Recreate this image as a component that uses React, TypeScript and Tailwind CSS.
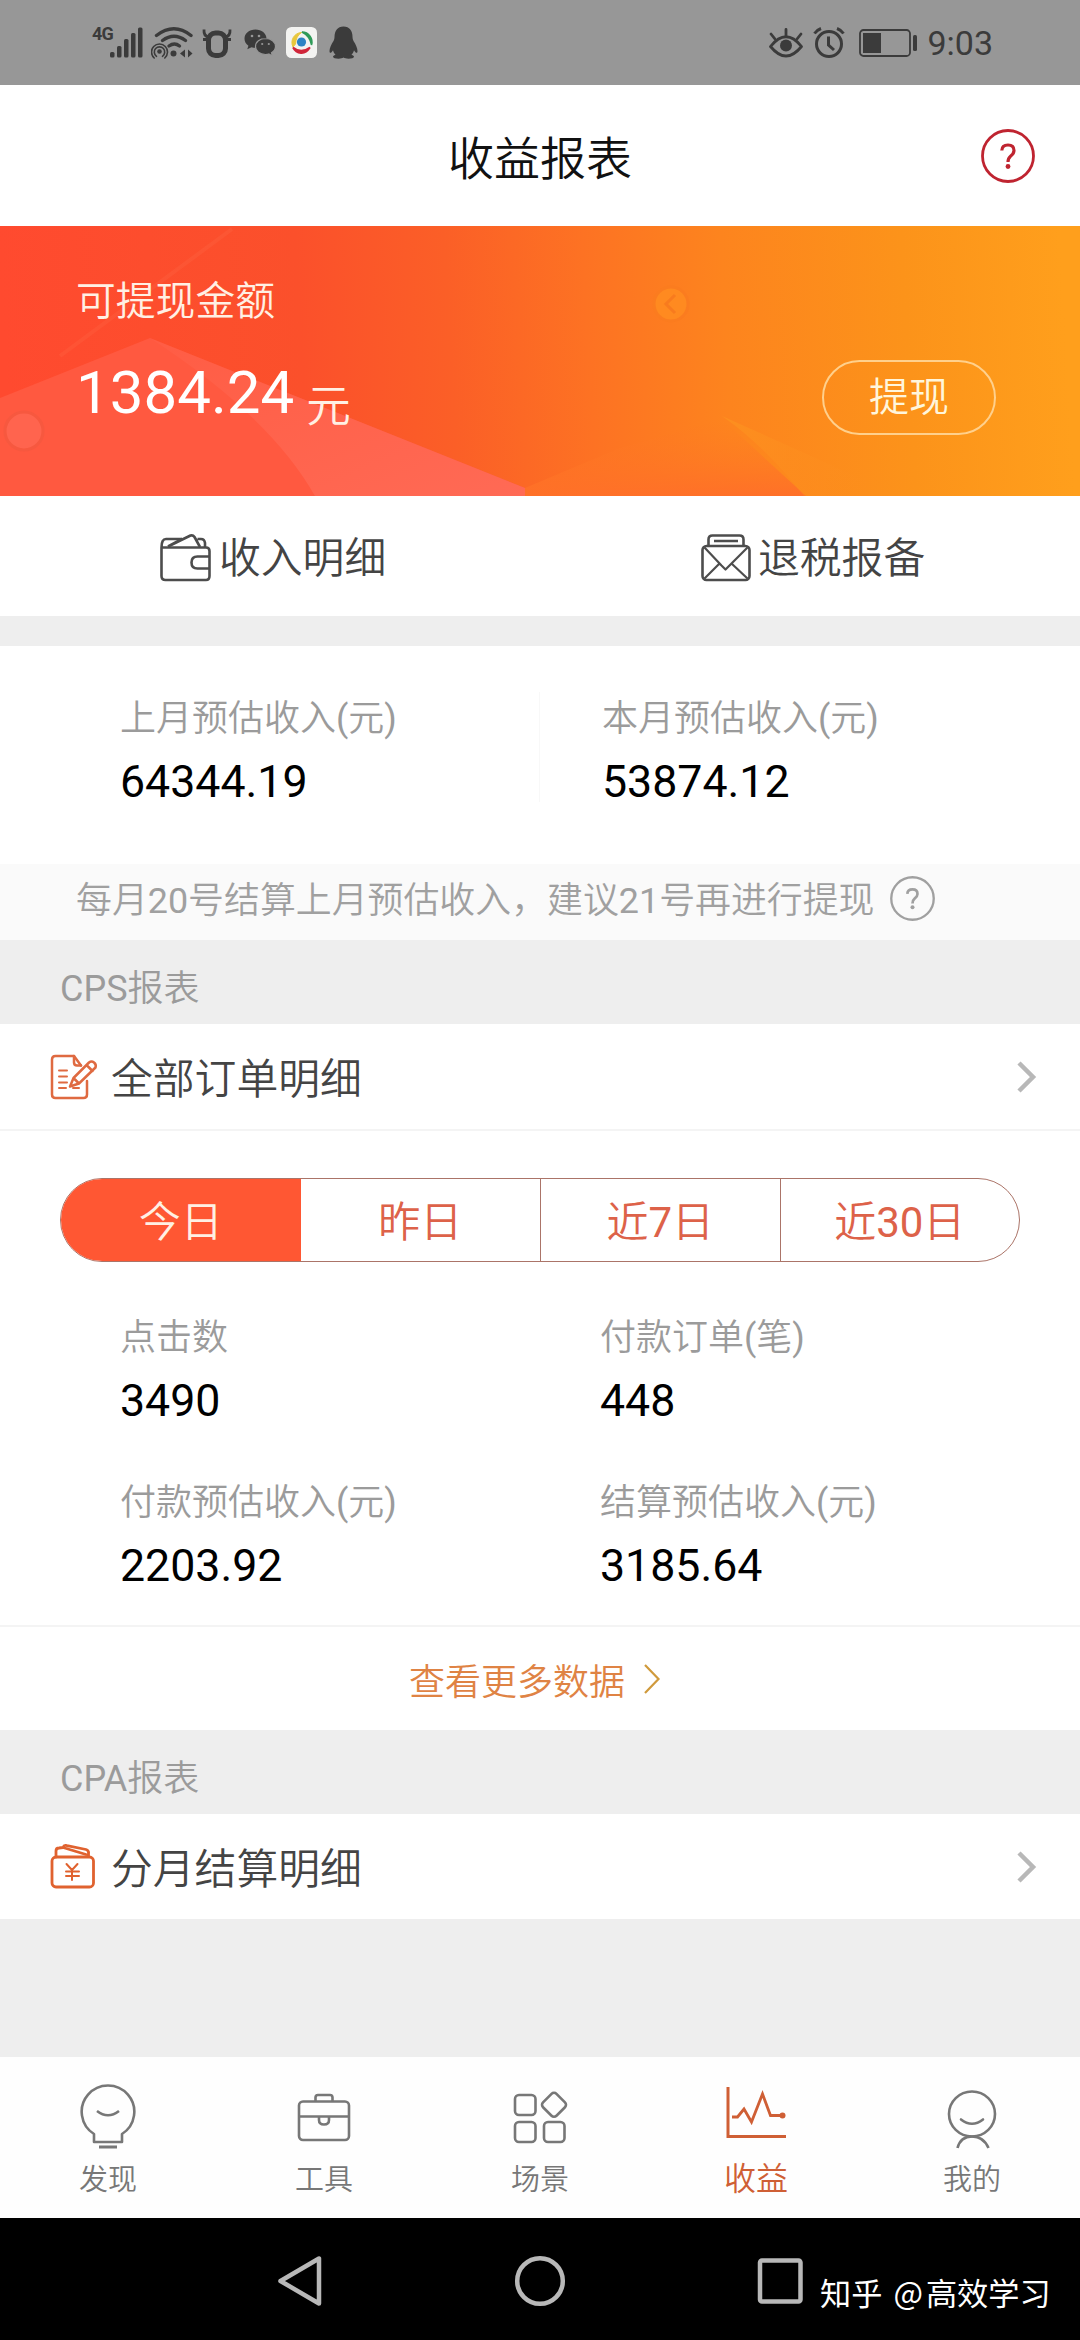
import React from "react";

type IconProps = { className?: string };

interface Stat {
  label: string;
  value: string;
}

const monthStats: Stat[] = [
  { label: "上月预估收入(元)", value: "64344.19" },
  { label: "本月预估收入(元)", value: "53874.12" },
];

const cpsStats: Stat[] = [
  { label: "点击数", value: "3490" },
  { label: "付款订单(笔)", value: "448" },
  { label: "付款预估收入(元)", value: "2203.92" },
  { label: "结算预估收入(元)", value: "3185.64" },
];

const ranges = ["今日", "昨日", "近7日", "近30日"];

/* ---------- status bar icons ---------- */

const SignalIcon = () => (
  <svg width="34" height="31" viewBox="0 0 34 31" fill="#3b3b3b">
    <rect x="0" y="25" width="4.5" height="5.5" rx="1.5" />
    <rect x="7" y="19" width="4.5" height="11.5" rx="1.5" />
    <rect x="14" y="12" width="4.5" height="18.5" rx="1.5" />
    <rect x="21" y="6" width="4.5" height="24.5" rx="1.5" />
    <rect x="28" y="0.5" width="4.5" height="30" rx="1.5" />
  </svg>
);

const WifiIcon = () => (
  <svg width="42" height="32" viewBox="0 0 42 32" fill="none" stroke="#3b3b3b" strokeLinecap="round">
    <path d="M5.5 8.5Q23 -5 40 8.5" strokeWidth="3.4" />
    <path d="M11.5 13.5Q23 5 34.5 13.5" strokeWidth="3.4" />
    <path d="M18 19Q23.5 15 28.5 19" strokeWidth="3.4" />
    <circle cx="8.5" cy="24.5" r="2.3" fill="#3b3b3b" stroke="none" />
    <path d="M5.5 29.3A5.2 5.2 0 1 1 11.5 29.3" strokeWidth="1.6" />
    <path d="M3.2 31A8 8 0 1 1 13.8 31" strokeWidth="1.6" />
    <circle cx="22.5" cy="26.5" r="3" fill="#3b3b3b" stroke="none" />
    <path d="M34 22.5v8l-5-4zM37 22.5v8l4.5-4z" fill="#3b3b3b" stroke="none" />
  </svg>
);

const BullIcon = () => (
  <svg width="30" height="30" viewBox="0 0 30 30" fill="none" stroke="#3b3b3b">
    <rect x="6.5" y="5" width="17" height="22.5" rx="7" strokeWidth="5" />
    <path d="M7 9Q1.5 8.5 2 1.5M23 9Q28.5 8.5 28 1.5M1 11.5h4M25 11.5h4" strokeWidth="2.8" />
  </svg>
);

const WechatIcon = () => (
  <svg width="32" height="27" viewBox="0 0 32 27">
    <path d="M11.5 0.5C5 0.5 0.5 4.5 0.5 9.7c0 3 1.5 5.3 3.9 7L3.3 20.3l4.2-2.1c1.3.4 2.6.6 4 .6C18 18.8 22.5 15 22.5 9.7S17.5.5 11.5.5z" fill="#3b3b3b" />
    <path d="M21.5 9.5c-5.6 0-10 3.4-10 8s4.4 8 10 8c1.2 0 2.3-.1 3.3-.5l3.7 2-1-3.2c2.3-1.5 4-3.7 4-6.3 0-4.6-4.4-8-10-8z" fill="#3b3b3b" stroke="#979797" strokeWidth="1.2" />
    <circle cx="8" cy="7" r="1.3" fill="#979797" />
    <circle cx="15" cy="7" r="1.3" fill="#979797" />
    <circle cx="18.2" cy="15" r="1.1" fill="#979797" />
    <circle cx="24.8" cy="15" r="1.1" fill="#979797" />
  </svg>
);

const NewsAppIcon = () => (
  <svg width="31" height="31" viewBox="0 0 31 31" fill="none">
    <rect width="31" height="31" rx="5.5" fill="#f3f3f1" />
    <path d="M7 20A10 10 0 0 1 15.5 5.5Q10 9 9.5 17z" fill="#e8c73c" stroke="#e8c73c" />
    <path d="M16 5A10 10 0 0 1 25.5 18Q24 9 16 5z" fill="#2f9a58" stroke="#2f9a58" strokeWidth="1.5" />
    <path d="M7 20.5Q15 27 24 20.5Q20 26.5 15 26Q9.5 25.5 7 20.5z" fill="#d0263a" stroke="#d0263a" strokeWidth="1.8" />
    <circle cx="15.5" cy="15" r="4.6" fill="#2d83c4" />
  </svg>
);

const QQIcon = () => (
  <svg width="29" height="33" viewBox="0 0 29 33" fill="#3b3b3b">
    <path d="M14.5 0.5C8.5 0.5 5.5 5 5.5 11c0 1.5-.3 2.6-1 4C2.3 18.5.5 22 .5 25c0 1.5.6 2 1.2 1.8.8-.3 1.8-1.5 2.3-2.6.4 1.7 1.3 3.3 2.5 4.5-1.6.5-2.5 1.2-2.5 2 0 1.3 2.5 2 5.5 2 2.2 0 4-.5 5-1.2 1 .7 2.8 1.2 5 1.2 3 0 5.5-.7 5.5-2 0-.8-.9-1.5-2.5-2 1.2-1.2 2.1-2.8 2.5-4.5.5 1.1 1.5 2.3 2.3 2.6.6.2 1.2-.3 1.2-1.8 0-3-1.8-6.5-4-10-.7-1.4-1-2.5-1-4 0-6-3-10.5-9-10.5z" />
  </svg>
);

const EyeIcon = () => (
  <svg width="34" height="30" viewBox="0 0 34 30" fill="none" stroke="#3b3b3b" strokeWidth="2.8" strokeLinecap="round">
    <path d="M1.5 18.5Q17 -1 32.5 18.5Q17 37.5 1.5 18.5z" strokeLinejoin="round" />
    <circle cx="17" cy="17.5" r="6" fill="#3b3b3b" stroke="none" />
    <path d="M17 1.5v6M2 6l4 5M32 6l-4 5" />
  </svg>
);

const AlarmIcon = () => (
  <svg width="32" height="31" viewBox="0 0 32 31" fill="none" stroke="#3b3b3b" strokeWidth="3">
    <circle cx="16" cy="17" r="12.5" />
    <path d="M15.5 9.5v8.5l5.5 5" />
    <path d="M1.5 6.5Q4 3 8 1.5M30.5 6.5Q28 3 24 1.5" />
  </svg>
);

const BatteryIcon = () => (
  <svg width="59" height="28" viewBox="0 0 59 28">
    <rect x="1" y="1" width="50" height="26" rx="3.5" fill="none" stroke="#3b3b3b" strokeWidth="1.8" />
    <rect x="4" y="4" width="18" height="20" fill="#3b3b3b" />
    <rect x="54" y="6" width="4" height="16" rx="1.5" fill="#3b3b3b" />
  </svg>
);

/* ---------- page icons ---------- */

const WalletIcon = () => (
  <svg width="51" height="48" viewBox="0 0 51 48" fill="none" stroke="#4d4d4d" strokeWidth="2.6" strokeLinejoin="round">
    <path d="M1.5 13.5V42Q1.5 46 5.5 46H46Q49.5 46 49.5 42V17Q49.5 13.5 46 13.5H1.5Q1.5 5 6 5H22" />
    <path d="M8 12.5L30.5 1.5Q33 0.8 34.5 3L40 13M37.5 5H41Q44.5 5 45 9V13M22 5L8 12.5" />
    <path d="M49.5 22.5H37.5Q31.5 22.5 31.5 28.5T37.5 34.5H49.5" />
  </svg>
);

const EnvelopeIcon = () => (
  <svg width="50" height="48" viewBox="0 0 50 48" fill="none" stroke="#4d4d4d" strokeWidth="2.6" strokeLinejoin="round">
    <rect x="1.5" y="12" width="47" height="34" rx="4" />
    <path d="M7.5 12V5.5Q7.5 1.5 11.5 1.5H38.5Q42.5 1.5 42.5 5.5V12M13 7H37" />
    <path d="M3.5 13.5L20.5 31.5L24.5 35.5L28.5 31.5L46.5 13.5M3.5 44.5L18.5 29.5M46.5 44.5L30.5 29.5" strokeWidth="2.2" />
  </svg>
);

const OrderIcon = () => (
  <svg width="48" height="46" viewBox="0 0 48 46" fill="none" stroke="#df6a41" strokeWidth="2.5" strokeLinejoin="round" strokeLinecap="round">
    <path d="M31 11.5L24 2H5.5Q2 2 2 5.5V40.5Q2 44 5.5 44H33.5Q37 44 37 40.5V27" />
    <path d="M24 2V8.5Q24 11.5 27 11.5H31" />
    <path d="M9 16.5H17M9 22.5H17M9 28.5H17M9 34H16" strokeWidth="2" />
    <path d="M20 32.5L23.5 24L39 8.5Q41.5 6.5 44 8.5T45.5 13.5L29 29.5zM23.5 24L29 29.5M36.5 11L42.5 17" />
    <path d="M23 34H29" strokeWidth="2" />
  </svg>
);

const SettleIcon = () => (
  <svg width="48" height="46" viewBox="0 0 48 46" fill="none" stroke="#e0622f" strokeWidth="2.8" strokeLinejoin="round" strokeLinecap="round">
    <rect x="2" y="13" width="41.5" height="30" rx="4" />
    <path d="M6 13V7Q6 4 9 4L13 3.5M13 3.5Q14 0.8 17 1.6L36 5.5Q39 6.5 38.5 9.5V12.5M13 3.5L36 10.5" />
    <path d="M16.5 20L22 26L27.5 20M22 26V36M16 27.5H29M16 32H29" strokeWidth="2" />
  </svg>
);

const ArrowRight = () => (
  <svg width="20" height="32" viewBox="0 0 20 32" fill="none" stroke="#b8b8b8" strokeWidth="4.5">
    <path d="M2 2L16 16L2 30" />
  </svg>
);

const HelpIcon = ({ className }: IconProps) => (
  <svg className={className} viewBox="0 0 54 54" fill="none" stroke="currentColor" strokeWidth="2.8">
    <circle cx="27" cy="27" r="25.5" />
    <path d="M20.8 21.5Q21 16 27 16T33 21.5Q33 24.5 29.5 27.2Q27 29.2 27 33" strokeWidth="3.2" />
    <circle cx="27" cy="37.5" r="2.4" fill="currentColor" stroke="none" />
  </svg>
);

/* ---------- tab bar icons ---------- */

const DiscoverIcon = () => (
  <svg width="58" height="66" viewBox="0 0 58 66" fill="none" stroke="#777" strokeWidth="2.6">
    <path d="M15 59V51A26.3 26.3 0 1 1 43 51V59z" strokeLinejoin="round" />
    <path d="M18 28Q29 36.5 40 28" />
    <path d="M20 64H38" strokeWidth="3" />
  </svg>
);

const ToolIcon = () => (
  <svg width="54" height="66" viewBox="0 0 54 66" fill="none" stroke="#777" strokeWidth="2.6">
    <rect x="2" y="18.5" width="50" height="38.5" rx="4" />
    <path d="M2 33.5H52M18.5 18.5V14.5Q18.5 12 21 12H33Q35.5 12 35.5 14.5V18.5M22 34V37Q22 41.5 27 41.5T32 37V34" />
  </svg>
);

const SceneIcon = () => (
  <svg width="56" height="66" viewBox="0 0 56 66" fill="none" stroke="#777" strokeWidth="2.6">
    <rect x="3" y="12" width="20.5" height="20" rx="4" />
    <rect x="3" y="39" width="20.5" height="20" rx="4" />
    <rect x="32" y="39" width="20.5" height="20" rx="4" />
    <rect x="32.5" y="12.3" width="19" height="19" rx="3.5" transform="rotate(45 42 21.8)" />
  </svg>
);

const IncomeIcon = () => (
  <svg width="62" height="66" viewBox="0 0 62 66" fill="none" stroke="#cf5f35" strokeWidth="3">
    <path d="M3 4V53.5H61" />
    <path d="M7 34H12.5L19 26L26.5 39L37.5 11L45.5 32.5H57" strokeWidth="2.8" />
    <circle cx="57.5" cy="32.5" r="3" fill="#cf5f35" stroke="none" />
  </svg>
);

const MineIcon = () => (
  <svg width="50" height="66" viewBox="0 0 50 66" fill="none" stroke="#777" strokeWidth="2.6">
    <ellipse cx="25" cy="31" rx="23" ry="22.5" />
    <path d="M14 36.5Q25 45 36 36.5" strokeLinecap="round" />
    <path d="M10.5 65Q13.5 53.5 25 53.5T41.5 65" />
  </svg>
);

const tabs = [
  { label: "发现", icon: <DiscoverIcon /> },
  { label: "工具", icon: <ToolIcon /> },
  { label: "场景", icon: <SceneIcon /> },
  { label: "收益", icon: <IncomeIcon />, active: true },
  { label: "我的", icon: <MineIcon /> },
];

/* ---------- blocks ---------- */

function StatusBar() {
  return (
    <div className="flex h-[85px] items-center justify-between bg-[#979797] pr-[87px] pl-[92px] text-[#3b3b3b]">
      <div className="flex items-center">
        <span className="mb-[18px] w-[18px] text-[18px] leading-none font-bold tracking-tighter">4G</span>
        <SignalIcon />
        <div className="ml-[7px]"><WifiIcon /></div>
        <div className="ml-[9px]"><BullIcon /></div>
        <div className="ml-[12px]"><WechatIcon /></div>
        <div className="ml-[10px]"><NewsAppIcon /></div>
        <div className="ml-[12px]"><QQIcon /></div>
      </div>
      <div className="flex items-center">
        <EyeIcon />
        <div className="ml-[10px]"><AlarmIcon /></div>
        <div className="ml-[14px]"><BatteryIcon /></div>
        <span className="ml-[9px] text-[34px] leading-none">9:03</span>
      </div>
    </div>
  );
}

function HeroArt() {
  return (
    <svg className="absolute inset-0 h-full w-full" viewBox="0 0 1080 270" preserveAspectRatio="none">
      <defs>
        <linearGradient id="heroBg" gradientUnits="userSpaceOnUse" x1="0" y1="60" x2="1060" y2="0">
          <stop offset="0" stopColor="#ff4a2f" />
          <stop offset="0.28" stopColor="#fb502b" />
          <stop offset="0.42" stopColor="#fb5f27" />
          <stop offset="0.55" stopColor="#fd7223" />
          <stop offset="0.68" stopColor="#fd841e" />
          <stop offset="0.85" stopColor="#fc931a" />
          <stop offset="1" stopColor="#ff9f1c" />
        </linearGradient>
        <linearGradient id="heroFacet" x1="0" y1="0" x2="1" y2="1">
          <stop offset="0" stopColor="#ff6a55" stopOpacity="0.2" />
          <stop offset="1" stopColor="#ff6a55" />
        </linearGradient>
        <linearGradient id="heroBeam" x1="0" y1="0" x2="0" y2="1">
          <stop offset="0" stopColor="#fd7c22" stopOpacity="0" />
          <stop offset="1" stopColor="#ff7028" />
        </linearGradient>
        <linearGradient id="heroStripe" x1="0" y1="0" x2="1" y2="0.3">
          <stop offset="0" stopColor="#fd8f1f" />
          <stop offset="1" stopColor="#fd8f1f" stopOpacity="0" />
        </linearGradient>
      </defs>
      <rect width="1080" height="270" fill="url(#heroBg)" />
      <path d="M0 172L150 112L525 262V270H0z" fill="#ff5940" />
      <path d="M150 112L525 262V270H315Q270 190 150 112z" fill="url(#heroFacet)" />
      <path d="M525 262L620 222L722 193L806 270H525z" fill="url(#heroBeam)" />
      <path d="M722 190Q800 225 900 270H804Q765 220 722 190z" fill="url(#heroStripe)" />
      <path d="M60 130L232 3" stroke="#ff7350" strokeWidth="4" opacity="0.2" />
      <circle cx="24" cy="205" r="19" fill="#ff6a54" stroke="#f4583f" strokeWidth="3" opacity="0.7" />
      <circle cx="671" cy="78" r="17" fill="#ff8a20" stroke="#fb7c1f" strokeWidth="3" />
      <path d="M675 69l-9 9l9 9" stroke="#f87b1e" strokeWidth="3" fill="none" />
    </svg>
  );
}

function Hero() {
  return (
    <div className="relative h-[270px] overflow-hidden">
      <HeroArt />
      <div className="relative flex h-full items-start justify-between pr-[84px] pl-[76px] text-white">
        <div className="pt-[46px]">
          <div className="text-[39.8px] leading-[60px] text-[#fff0e4]">可提现金额</div>
          <div className="mt-[21px] flex items-baseline text-[60px] leading-[80px]">
            1384.24
            <span className="ml-[12px] translate-y-[9px] text-[44.5px] text-[#fff0e4]">元</span>
          </div>
        </div>
        <button className="mt-[134px] flex h-[75px] w-[174px] items-center justify-center rounded-full border-[2.5px] border-[#ffd08c] text-[40px] leading-none text-[#fff6dc]">
          提现
        </button>
      </div>
    </div>
  );
}

function StatCell({ label, value }: Stat) {
  return (
    <div>
      <div className="text-[36px] leading-[54px] text-[#9b9b9b]">{label}</div>
      <div className="mt-[6px] text-[44.7px] leading-[60px] text-black">{value}</div>
    </div>
  );
}

function SectionTitle({ children }: { children: React.ReactNode }) {
  return (
    <div className="flex h-[84px] items-center bg-[#eeeeee] pt-[13px] pl-[60px] text-[36px] leading-none text-[#9b9b9b]">
      {children}
    </div>
  );
}

function LinkRow({ icon, label }: { icon: React.ReactNode; label: string }) {
  return (
    <div className="flex h-[105px] items-center pr-[43px] pl-[50px]">
      {icon}
      <span className="ml-[13px] flex-1 pt-[6px] text-[41.8px] leading-[60px] text-[#444]">{label}</span>
      <ArrowRight />
    </div>
  );
}

function TabBar() {
  return (
    <div className="grid h-[161px] grid-cols-5 bg-[#fefefe]">
      {tabs.map((t) => (
        <div key={t.label} className="flex flex-col items-center pt-[26px]">
          {t.icon}
          <span
            className={
              t.active
                ? "mt-[8px] text-[32px] leading-[44px] text-[#cf5f35]"
                : "mt-[9px] text-[29px] leading-[44px] text-[#777]"
            }
          >
            {t.label}
          </span>
        </div>
      ))}
    </div>
  );
}

export default function App() {
  return (
    <div
      lang="zh-CN"
      className="flex h-[2340px] w-[1080px] flex-col overflow-hidden bg-white font-['Roboto','Noto_Sans_CJK_SC_DemiLight','Noto_Sans_CJK_SC',sans-serif] font-normal"
    >
      <StatusBar />

      <header className="grid h-[141px] grid-cols-[1fr_auto_1fr] items-center px-[45px]">
        <h1 className="col-start-2 pt-[6px] text-[46px] leading-[60px] text-[#111]">收益报表</h1>
        <HelpIcon className="h-[54px] w-[54px] justify-self-end text-[#bf2430]" />
      </header>

      <Hero />

      <div className="flex h-[120px]">
        <div className="flex flex-1 items-center pt-[3px] pl-[160px] text-[41.8px] leading-[60px] text-[#444]">
          <WalletIcon />
          <span className="ml-[8px] pt-[3px]">收入明细</span>
        </div>
        <div className="flex flex-1 items-center pt-[3px] pl-[162px] text-[41.8px] leading-[60px] text-[#444]">
          <EnvelopeIcon />
          <span className="ml-[7px] pt-[3px]">退税报备</span>
        </div>
      </div>
      <div className="h-[30px] bg-[#eeeeee]" />

      <div className="grid h-[218px] grid-cols-2 pt-[46px]">
        {monthStats.map((s, i) => (
          <div
            key={s.label}
            className={i === 0 ? "h-[110px] border-r border-[#f8f8f8] pl-[120px]" : "h-[110px] pl-[62px]"}
          >
            <StatCell {...s} />
          </div>
        ))}
      </div>

      <div className="flex h-[76px] items-center bg-[#fafafa] pb-[8px] pl-[76px]">
        <span className="pt-[7px] text-[35.9px] leading-none text-[#a0a0a0]">
          每月20号结算上月预估收入，建议21号再进行提现
        </span>
        <HelpIcon className="ml-[15px] h-[45px] w-[45px] text-[#a0a0a0]" />
      </div>

      <SectionTitle>CPS报表</SectionTitle>
      <LinkRow icon={<OrderIcon />} label="全部订单明细" />

      <div className="h-[498px] border-y-2 border-[#f4f4f4]">
        <div className="mx-[60px] mt-[47px] grid h-[84px] grid-cols-4 overflow-hidden rounded-full border border-[#ab7468]">
          {ranges.map((r, i) => (
            <button
              key={r}
              className={
                i === 0
                  ? "bg-[#ff5733] pt-[5px] text-[42px] leading-none text-[#fff0e4]"
                  : i === 1
                    ? "pt-[5px] text-[42px] leading-none text-[#dd6249]"
                    : "border-l border-[#ab7468] pt-[5px] text-[42px] leading-none text-[#dd6249]"
              }
            >
              {r}
            </button>
          ))}
        </div>
        <div className="mt-[49px] grid grid-cols-2 gap-y-[45px] pl-[120px]">
          {cpsStats.map((s) => (
            <StatCell key={s.label} {...s} />
          ))}
        </div>
      </div>

      <div className="flex h-[103px] items-center justify-center gap-[18px] pr-[10px] text-[36px] leading-none text-[#df8344]">
        <span className="pt-[8px]">查看更多数据</span>
        <svg width="18" height="30" viewBox="0 0 18 30" fill="none" stroke="#d09a3c" strokeWidth="2.2">
          <path d="M2 1L15.5 15L2 29" />
        </svg>
      </div>

      <SectionTitle>CPA报表</SectionTitle>
      <LinkRow icon={<SettleIcon />} label="分月结算明细" />
      <div className="flex-1 bg-[#eeeeee]" />

      <TabBar />

      <div className="flex h-[122px] items-start bg-black pt-[36px] pl-[276px]">
        <svg width="48" height="54" viewBox="0 0 48 54" fill="none" stroke="#b8b8b8" strokeWidth="4.5" strokeLinejoin="round">
          <path d="M43 4.5V49.5L4.5 27z" />
        </svg>
        <svg className="ml-[189px]" width="54" height="54" viewBox="0 0 54 54" fill="none" stroke="#b8b8b8" strokeWidth="4.5">
          <circle cx="27" cy="27" r="22.8" />
        </svg>
        <svg className="ml-[189px]" width="50" height="54" viewBox="0 0 50 54" fill="none" stroke="#b8b8b8" strokeWidth="4.5">
          <rect x="4" y="6.5" width="40.5" height="41" rx="2" />
        </svg>
        <span className="mt-[18px] ml-[14px] font-['Noto_Sans_CJK_SC',sans-serif] text-[31.2px] leading-[40px] whitespace-nowrap text-white">
          知乎 <span className="mr-[3px] ml-[4px]">@</span>高效学习
        </span>
      </div>
    </div>
  );
}
